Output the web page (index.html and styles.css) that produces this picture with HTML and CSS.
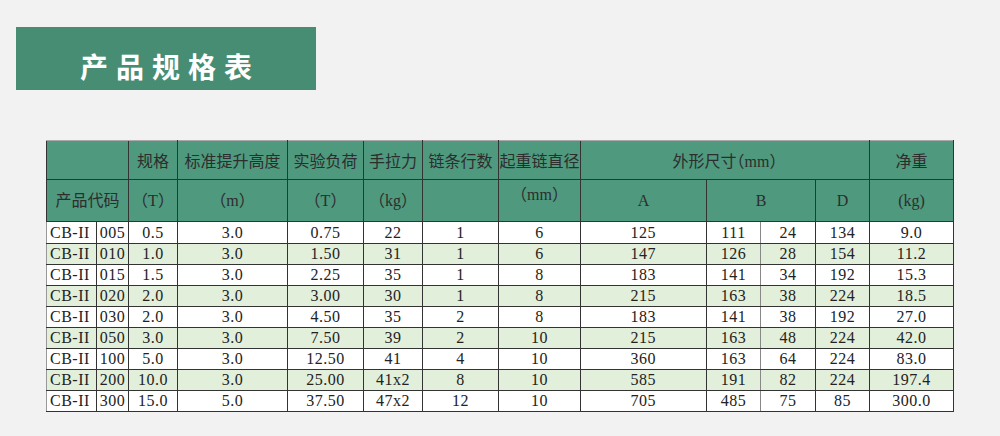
FILE: index.html
```html
<!DOCTYPE html>
<html lang="zh">
<head>
<meta charset="utf-8">
<title>产品规格表</title>
<link rel="stylesheet" href="styles.css">
</head>
<body>
<div class="title">产品规格表</div>
<table class="spec">
  <colgroup>
    <col class="c0"><col class="c1"><col class="c2"><col class="c3"><col class="c4"><col class="c5"><col class="c6"><col class="c7"><col class="c8"><col class="c9"><col class="c10"><col class="c11"><col class="c12">
  </colgroup>
  <thead>
    <tr class="h1">
      <th colspan="2" class="dr"></th>
      <th>规格</th>
      <th>标准提升高度</th>
      <th class="dr">实验负荷</th>
      <th>手拉力</th>
      <th>链条行数</th>
      <th class="dr">起重链直径</th>
      <th colspan="4">外形尺寸（mm）</th>
      <th>净重</th>
    </tr>
    <tr class="h2">
      <th colspan="2" class="dr">产品代码</th>
      <th>（T）</th>
      <th>（m）</th>
      <th class="dr">（T）</th>
      <th>（kg）</th>
      <th></th>
      <th class="dr up">（mm）</th>
      <th>A</th>
      <th colspan="2" class="dr">B</th>
      <th>D</th>
      <th>(kg)</th>
    </tr>
  </thead>
  <tbody>
    <tr><td class="code">CB-II</td><td>005</td><td>0.5</td><td>3.0</td><td>0.75</td><td>22</td><td>1</td><td>6</td><td class="a">125</td><td class="b1">111</td><td>24</td><td>134</td><td>9.0</td></tr>
    <tr class="alt"><td class="code">CB-II</td><td>010</td><td>1.0</td><td>3.0</td><td>1.50</td><td>31</td><td>1</td><td>6</td><td class="a">147</td><td class="b1">126</td><td>28</td><td>154</td><td>11.2</td></tr>
    <tr><td class="code">CB-II</td><td>015</td><td>1.5</td><td>3.0</td><td>2.25</td><td>35</td><td>1</td><td>8</td><td class="a">183</td><td class="b1">141</td><td>34</td><td>192</td><td>15.3</td></tr>
    <tr class="alt"><td class="code">CB-II</td><td>020</td><td>2.0</td><td>3.0</td><td>3.00</td><td>30</td><td>1</td><td>8</td><td class="a">215</td><td class="b1">163</td><td>38</td><td>224</td><td>18.5</td></tr>
    <tr><td class="code">CB-II</td><td>030</td><td>2.0</td><td>3.0</td><td>4.50</td><td>35</td><td>2</td><td>8</td><td class="a">183</td><td class="b1">141</td><td>38</td><td>192</td><td>27.0</td></tr>
    <tr class="alt"><td class="code">CB-II</td><td>050</td><td>3.0</td><td>3.0</td><td>7.50</td><td>39</td><td>2</td><td>10</td><td class="a">215</td><td class="b1">163</td><td>48</td><td>224</td><td>42.0</td></tr>
    <tr><td class="code">CB-II</td><td>100</td><td>5.0</td><td>3.0</td><td>12.50</td><td>41</td><td>4</td><td>10</td><td class="a">360</td><td class="b1">163</td><td>64</td><td>224</td><td>83.0</td></tr>
    <tr class="alt"><td class="code">CB-II</td><td>200</td><td>10.0</td><td>3.0</td><td>25.00</td><td>41x2</td><td>8</td><td>10</td><td class="a">585</td><td class="b1">191</td><td>82</td><td>224</td><td>197.4</td></tr>
    <tr><td class="code">CB-II</td><td>300</td><td>15.0</td><td>5.0</td><td>37.50</td><td>47x2</td><td>12</td><td>10</td><td class="a">705</td><td class="b1">485</td><td>75</td><td>85</td><td>300.0</td></tr>
  </tbody>
</table>
</body>
</html>
```

FILE: styles.css
```css
html, body {
  margin: 0;
  padding: 0;
}
body {
  width: 1000px;
  height: 436px;
  background: #f2f2f2;
  overflow: hidden;
}
.title {
  margin: 27px 0 0 16px;
  width: 300px;
  height: 63px;
  box-sizing: border-box;
  padding-top: 14px;
  padding-left: 8px;
  background: #478d74;
  color: #ffffff;
  font-family: "Noto Sans CJK SC", sans-serif;
  font-weight: 700;
  font-size: 28px;
  letter-spacing: 8px;
  display: flex;
  align-items: center;
  justify-content: center;
}
.spec {
  margin: 50px 0 0 46px;
  border-collapse: collapse;
  table-layout: fixed;
  width: 908px;
  font-family: "Liberation Serif", "Noto Sans CJK SC", serif;
  font-size: 16px;
  color: #222;
  font-feature-settings: "halt";
}
.c0 { width: 50px; }
.c1 { width: 32px; }
.c2 { width: 49px; }
.c3 { width: 110px; }
.c4 { width: 76px; }
.c5 { width: 59px; }
.c6 { width: 76px; }
.c7 { width: 82px; }
.c8 { width: 126px; }
.c9 { width: 54px; }
.c10 { width: 55px; }
.c11 { width: 54px; }
.c12 { width: 84px; }
.spec th, .spec td {
  border: 1px solid #333;
  padding: 0;
  white-space: nowrap;
  overflow: visible;
  text-align: center;
  line-height: 18px;
}
.spec td {
  letter-spacing: 0.5px;
}
.spec th {
  background: #4f997e;
  color: #2d2d2d;
  font-weight: 400;
}
.spec th.dr {
  border-right-style: dashed;
}
.h1 th {
  height: 39px;
  padding-top: 3px;
  box-sizing: border-box;
  border-top-color: #aaa;
}
.h2 th {
  height: 35px;
}
.spec th.up {
  vertical-align: top;
  padding-top: 6px;
}
.spec tbody tr {
  height: 21px;
}
.spec tbody tr:first-child {
  height: 22px;
}
.spec tbody tr.alt {
  background: #e2efda;
}
.spec tbody tr:not(.alt) {
  background: #ffffff;
}
.spec td.code {
  text-align: left;
  padding-left: 3px;
  border-left-color: #999;
}
.spec td.a {
  text-align: right;
  padding-right: 50px;
}
.spec td.b1 {
  border-right: 1px solid #888;
}
```
